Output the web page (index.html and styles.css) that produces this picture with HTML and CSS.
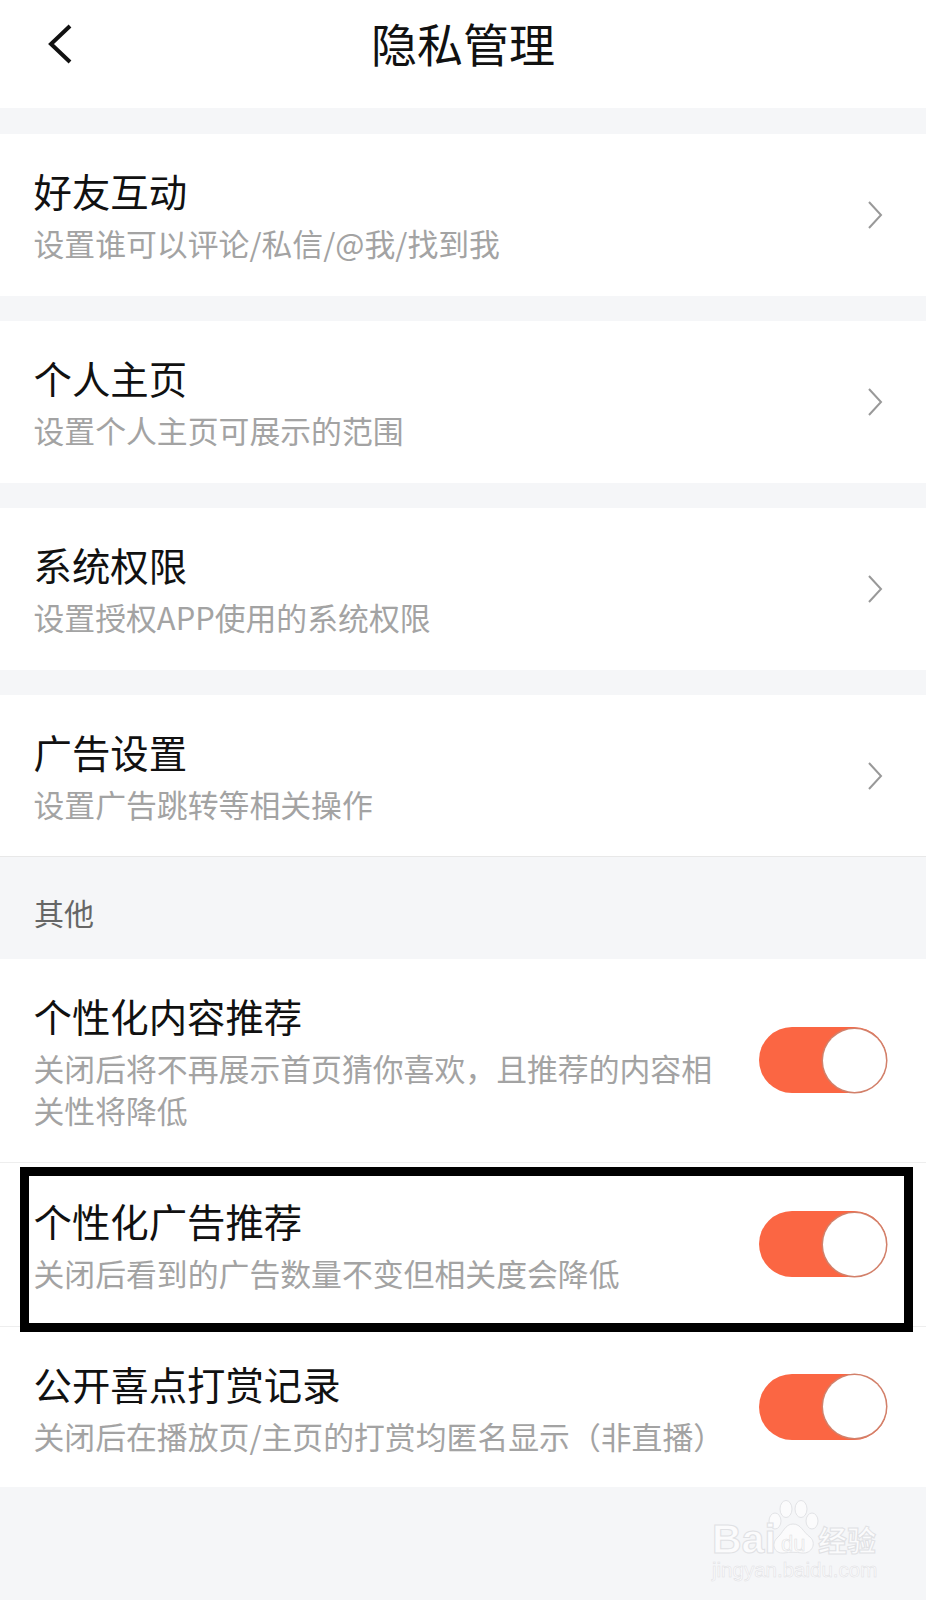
FILE: index.html
```html
<!DOCTYPE html>
<html lang="zh-CN">
<head>
  <meta charset="UTF-8">
  <title>隐私管理</title>
  <link rel="stylesheet" href="styles.css">
</head>
<body>
  <div class="page">
    <!-- Header -->
    <header class="top-bar">
      <svg class="back" width="26" height="40" viewBox="0 0 26 40">
        <path d="M23 2 L4 20 L23 38" fill="none" stroke="#111" stroke-width="4"/>
      </svg>
      <h1>隐私管理</h1>
    </header>

    <!-- Link rows -->
    <a class="row card">
      <div class="row-text">
        <div class="row-title">好友互动</div>
        <div class="row-sub">设置谁可以评论/私信/@我/找到我</div>
      </div>
      <svg class="arrow" width="16" height="28" viewBox="0 0 16 28"><path d="M2 1 L14 14 L2 27" fill="none" stroke="#999" stroke-width="2"/></svg>
    </a>
    <a class="row card">
      <div class="row-text">
        <div class="row-title">个人主页</div>
        <div class="row-sub">设置个人主页可展示的范围</div>
      </div>
      <svg class="arrow" width="16" height="28" viewBox="0 0 16 28"><path d="M2 1 L14 14 L2 27" fill="none" stroke="#999" stroke-width="2"/></svg>
    </a>
    <a class="row card">
      <div class="row-text">
        <div class="row-title">系统权限</div>
        <div class="row-sub">设置授权APP使用的系统权限</div>
      </div>
      <svg class="arrow" width="16" height="28" viewBox="0 0 16 28"><path d="M2 1 L14 14 L2 27" fill="none" stroke="#999" stroke-width="2"/></svg>
    </a>
    <a class="row card">
      <div class="row-text">
        <div class="row-title">广告设置</div>
        <div class="row-sub">设置广告跳转等相关操作</div>
      </div>
      <svg class="arrow" width="16" height="28" viewBox="0 0 16 28"><path d="M2 1 L14 14 L2 27" fill="none" stroke="#999" stroke-width="2"/></svg>
    </a>

    <div class="section-label">其他</div>

    <!-- Toggle rows -->
    <div class="row">
      <div class="row-text">
        <div class="row-title">个性化内容推荐</div>
        <div class="row-sub">关闭后将不再展示首页猜你喜欢，且推荐的内容相关性将降低</div>
      </div>
      <span class="toggle"></span>
    </div>
    <div class="row row-mid">
      <div class="row-text">
        <div class="row-title">个性化广告推荐</div>
        <div class="row-sub">关闭后看到的广告数量不变但相关度会降低</div>
      </div>
      <span class="toggle"></span>
    </div>
    <div class="row row-last">
      <div class="row-text">
        <div class="row-title">公开喜点打赏记录</div>
        <div class="row-sub">关闭后在播放页/主页的打赏均匿名显示（非直播）</div>
      </div>
      <span class="toggle"></span>
    </div>

    <!-- Annotation box and watermark sit over the page -->
    <div class="mark-box"></div>
    <div class="watermark">
      <svg class="paw" width="52" height="56" viewBox="0 0 52 56">
        <g fill="#fbfbfc" stroke="#e2e3e6" stroke-width="1">
          <ellipse cx="7" cy="21" rx="6" ry="8"/>
          <ellipse cx="18" cy="9" rx="6" ry="8.5"/>
          <ellipse cx="33" cy="9" rx="6" ry="8.5"/>
          <ellipse cx="44" cy="21" rx="6" ry="8"/>
          <path d="M25 24 C33 24 35 32 42 37 C49 43 44 54 34 53 C28 52 22 52 16 53 C6 54 3 44 9 38 C15 33 17 24 25 24 Z"/>
        </g>
      </svg>
      <span class="wm-bai">Bai</span>
      <span class="wm-du">du</span>
      <span class="wm-cn">经验</span>
      <span class="wm-url">jingyan.baidu.com</span>
    </div>
  </div>
</body>
</html>
```

FILE: styles.css
```css
* {
  box-sizing: border-box;
}

body {
  margin: 0;
  background-color: #f5f6f8;
  font-family: "Noto Sans CJK SC", "Liberation Sans", sans-serif;
}

.page {
  position: relative;
  height: 1600px;
  overflow: hidden;
}

.top-bar {
  position: relative;
  height: 108px;
  margin-bottom: 26px;
  background-color: #fff;
  display: flex;
  align-items: center;
  justify-content: center;
}

.top-bar h1 {
  margin: 0 0 24px;
  font-size: 46px;
  font-weight: 400;
  line-height: 60px;
  color: #111;
}

.back {
  position: absolute;
  left: 47px;
  top: 24px;
}

.row {
  display: flex;
  align-items: center;
  gap: 30px;
  padding: 32px 39px 31px 33.5px;
  background-color: #fff;
  border-bottom: 1px solid #eeeeee;
}

.card {
  height: 162px;
  padding: 31px 43px 31px 33.5px;
  border-bottom: none;
}

.card + .card {
  margin-top: 25px;
}

.card:nth-of-type(4) {
  border-bottom: 1px solid #e8e8e8;
}

.row-text {
  flex: 1;
  min-width: 0;
}

.row-title {
  font-size: 38.4px;
  line-height: 48px;
  color: #111;
}

.row-sub {
  margin-top: 8px;
  font-size: 30.85px;
  line-height: 42px;
  color: #a3a3a3;
}

.arrow {
  flex-shrink: 0;
}

.row-mid {
  height: 164px;
}

.row-last {
  height: 160px;
  border-bottom: none;
}

.section-label {
  height: 102px;
  padding: 33px 34px 0;
  font-size: 30px;
  line-height: 44px;
  color: #666;
}

.toggle {
  position: relative;
  flex-shrink: 0;
  width: 128px;
  height: 66px;
  margin-top: -2px;
  border-radius: 33px;
  background-color: #fb6643;
}

.toggle::after {
  content: "";
  position: absolute;
  right: 1.5px;
  top: 1.5px;
  width: 63px;
  height: 63px;
  border-radius: 50%;
  background-color: #fff;
  box-shadow: 0 0 0 1.5px #d2806a;
}

.mark-box {
  position: absolute;
  left: 20px;
  top: 1167px;
  width: 893px;
  height: 165px;
  border: 9px solid #000;
}

.watermark {
  position: absolute;
  left: 712px;
  top: 1500px;
  width: 170px;
  height: 82px;
  color: #fbfbfc;
  font-family: "Liberation Sans", sans-serif;
  -webkit-text-stroke: 1px #e0e1e4;
}

.paw {
  position: absolute;
  left: 56px;
  top: 0;
}

.wm-bai {
  position: absolute;
  left: 0;
  top: 16px;
  font-size: 41px;
  line-height: 46px;
  font-weight: 700;
}

.wm-du {
  position: absolute;
  left: 69px;
  top: 31px;
  font-size: 22px;
  line-height: 26px;
  -webkit-text-stroke: 0.5px #dcdde0;
}

.wm-cn {
  position: absolute;
  left: 106px;
  top: 20px;
  font-size: 29px;
  line-height: 38px;
  font-family: "Noto Sans CJK SC", sans-serif;
  font-weight: 700;
}

.wm-url {
  position: absolute;
  left: 0;
  top: 58px;
  font-size: 20.5px;
  line-height: 24px;
  white-space: nowrap;
  -webkit-text-stroke: 0.5px #dfe0e3;
}
```
